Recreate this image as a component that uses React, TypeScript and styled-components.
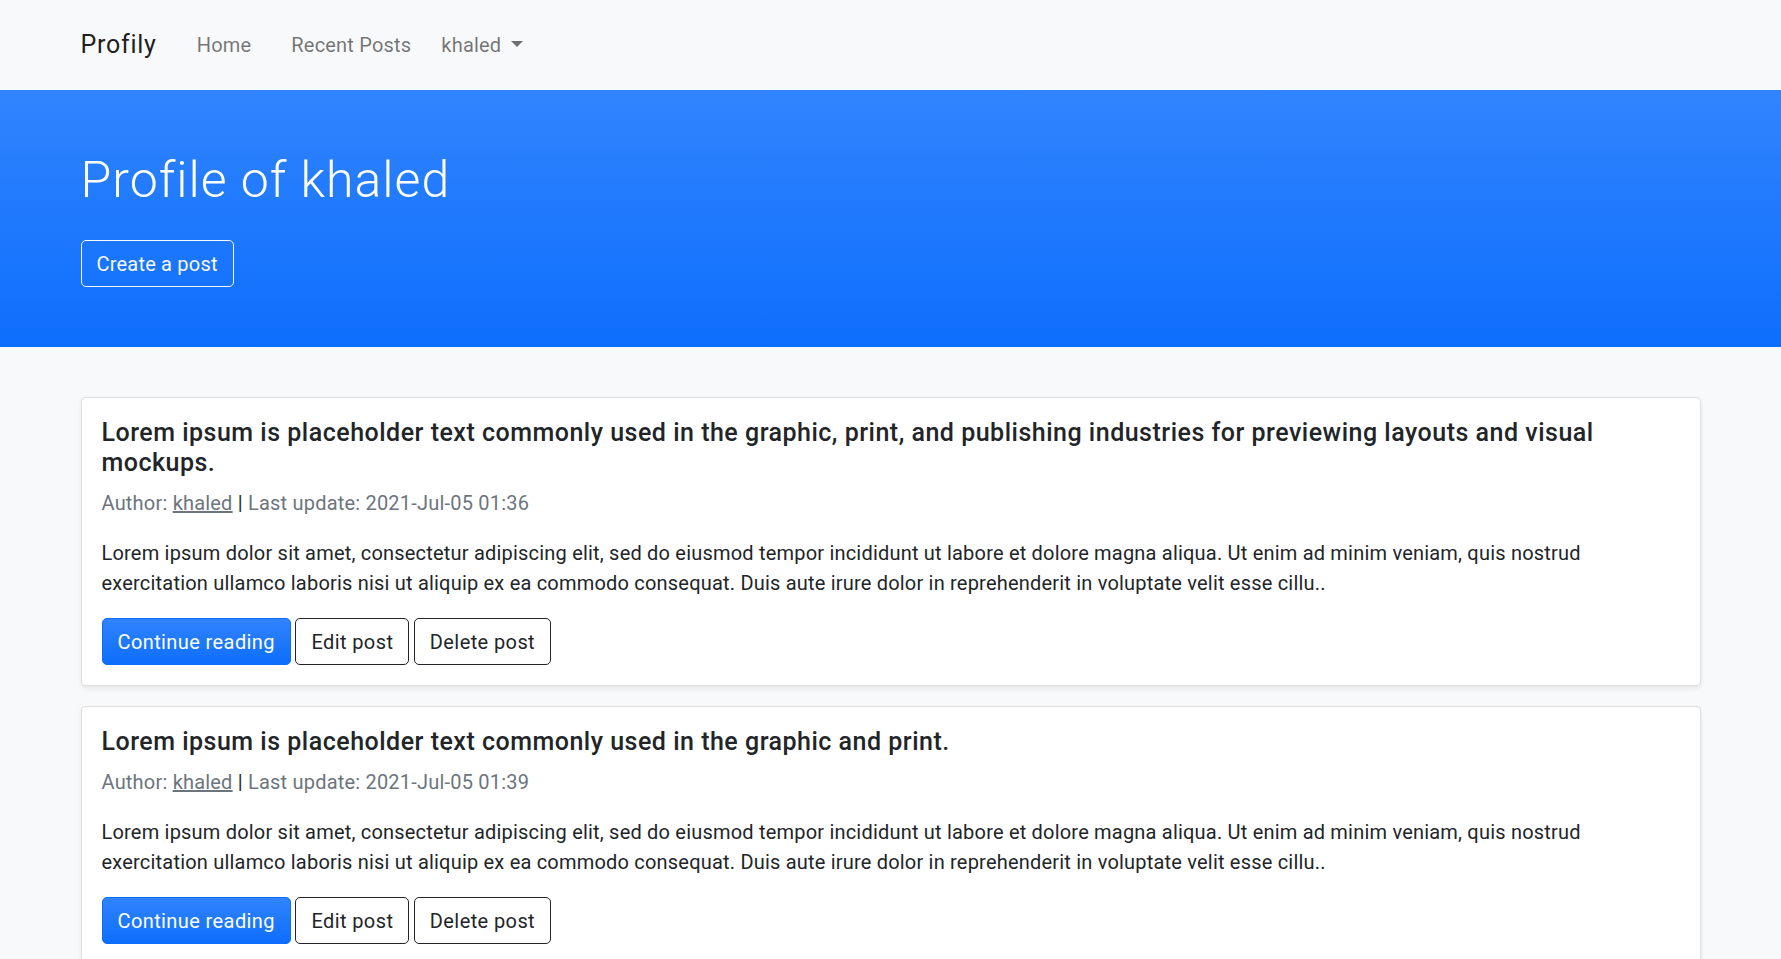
import { createGlobalStyle, styled } from 'styled-components';

type Post = {
  title: string;
  author: string;
  updated: string;
  excerpt: string;
};

const EXCERPT =
  'Lorem ipsum dolor sit amet, consectetur adipiscing elit, sed do eiusmod tempor incididunt ut labore et dolore magna aliqua. Ut enim ad minim veniam, quis nostrud exercitation ullamco laboris nisi ut aliquip ex ea commodo consequat. Duis aute irure dolor in reprehenderit in voluptate velit esse cillu..';

const posts: Post[] = [
  {
    title:
      'Lorem ipsum is placeholder text commonly used in the graphic, print, and publishing industries for previewing layouts and visual mockups.',
    author: 'khaled',
    updated: '2021-Jul-05 01:36',
    excerpt: EXCERPT,
  },
  {
    title: 'Lorem ipsum is placeholder text commonly used in the graphic and print.',
    author: 'khaled',
    updated: '2021-Jul-05 01:39',
    excerpt: EXCERPT,
  },
];

const App = () => {
  return (
    <>
      <GlobalStyle />
      <Navbar>
        <Container>
          <NavRow>
            <Brand href="#">Profily</Brand>
            <NavLink href="#">Home</NavLink>
            <NavLink href="#">Recent Posts</NavLink>
            <DropdownToggle href="#">khaled</DropdownToggle>
          </NavRow>
        </Container>
      </Navbar>

      <Hero>
        <Container>
          <HeroTitle>Profile of khaled</HeroTitle>
          <OutlineLightButton>Create a post</OutlineLightButton>
        </Container>
      </Hero>

      <Main>
        <Container>
          {posts.map((post, index) => (
            <Card key={index}>
              <CardTitle>{post.title}</CardTitle>
              <Meta>
                <Muted>
                  Author: <AuthorLink href="#">{post.author}</AuthorLink>
                </Muted>{' '}
                | <Muted>Last update: {post.updated}</Muted>
              </Meta>
              <Excerpt>{post.excerpt}</Excerpt>
              <ButtonRow>
                <Button $variant="primary">Continue reading</Button>
                <Button $variant="outline">Edit post</Button>
                <Button $variant="outline">Delete post</Button>
              </ButtonRow>
            </Card>
          ))}
        </Container>
      </Main>
    </>
  );
};

export default App;

const GlobalStyle = createGlobalStyle`
  * {
    box-sizing: border-box;
  }

  body {
    margin: 0;
    background: #f8f9fa;
    color: #212529;
    font-family: Roboto, 'Liberation Sans', sans-serif;
    font-size: 20px;
    line-height: 1.5;
    letter-spacing: 0.01em;
  }
`;

const Container = styled.div`
  width: 100%;
  max-width: 1650px;
  margin: 0 auto;
  padding: 0 15px;
`;

const Navbar = styled.nav`
  background: #f8f9fa;
  padding: 20px 0;
`;

const NavRow = styled.div`
  display: flex;
  align-items: center;
`;

const Brand = styled.a`
  font-size: 25px;
  line-height: 1.5;
  letter-spacing: 0.03em;
  padding: 6.25px 0;
  margin-right: 20px;
  color: rgba(0, 0, 0, 0.9);
  text-decoration: none;
`;

const NavLink = styled.a`
  padding: 10px 20px;
  color: rgba(0, 0, 0, 0.55);
  text-decoration: none;
`;

const DropdownToggle = styled.a`
  padding: 10px;
  color: rgba(0, 0, 0, 0.55);
  text-decoration: none;

  &::after {
    content: '';
    display: inline-block;
    margin-left: 0.5em;
    vertical-align: 0.255em;
    border-top: 0.3em solid;
    border-left: 0.3em solid transparent;
    border-right: 0.3em solid transparent;
  }
`;

const Hero = styled.header`
  background: linear-gradient(180deg, #3184fd 0%, #0d6efd 100%);
  padding: 60px 0;
  color: #fff;
`;

const HeroTitle = styled.h1`
  margin: 0 0 30px;
  font-size: 50px;
  font-weight: 300;
  line-height: 1.2;
  letter-spacing: 0.02em;
`;

const OutlineLightButton = styled.button`
  font: inherit;
  letter-spacing: inherit;
  color: #f8f9fa;
  background: transparent;
  border: 1px solid #f8f9fa;
  border-radius: 5px;
  padding: 7.5px 15px;
  line-height: 1.5;
  cursor: pointer;
`;

const Main = styled.main`
  padding-top: 50px;
`;

const Card = styled.article`
  background: #fff;
  border: 1px solid rgba(0, 0, 0, 0.125);
  border-radius: 5px;
  box-shadow: 0 2.5px 5px rgba(0, 0, 0, 0.075);
  padding: 20px;
  margin-bottom: 20px;
`;

const CardTitle = styled.h5`
  margin: 0 0 10px;
  font-size: 25px;
  font-weight: 500;
  line-height: 1.2;
  letter-spacing: 0.02em;
`;

const Meta = styled.p`
  margin: 0 0 20px;
`;

const Muted = styled.span`
  color: #6c757d;
`;

const AuthorLink = styled.a`
  color: #6c757d;
  text-decoration: underline;
`;

const Excerpt = styled.p`
  margin: 0 0 20px;
`;

const ButtonRow = styled.div`
  display: flex;
  gap: 4.5px;
`;

const Button = styled.button<{ $variant: 'primary' | 'outline' }>`
  font: inherit;
  letter-spacing: 0.02em;
  line-height: 1.5;
  padding: 7.5px 15px;
  border-radius: 5px;
  cursor: pointer;
  border: 1px solid ${(p) => (p.$variant === 'primary' ? '#0d6efd' : '#212529')};
  color: ${(p) => (p.$variant === 'primary' ? '#fff' : '#212529')};
  background: ${(p) =>
    p.$variant === 'primary'
      ? 'linear-gradient(180deg, rgba(255, 255, 255, 0.15), rgba(255, 255, 255, 0)) #0d6efd'
      : 'transparent'};
`;
